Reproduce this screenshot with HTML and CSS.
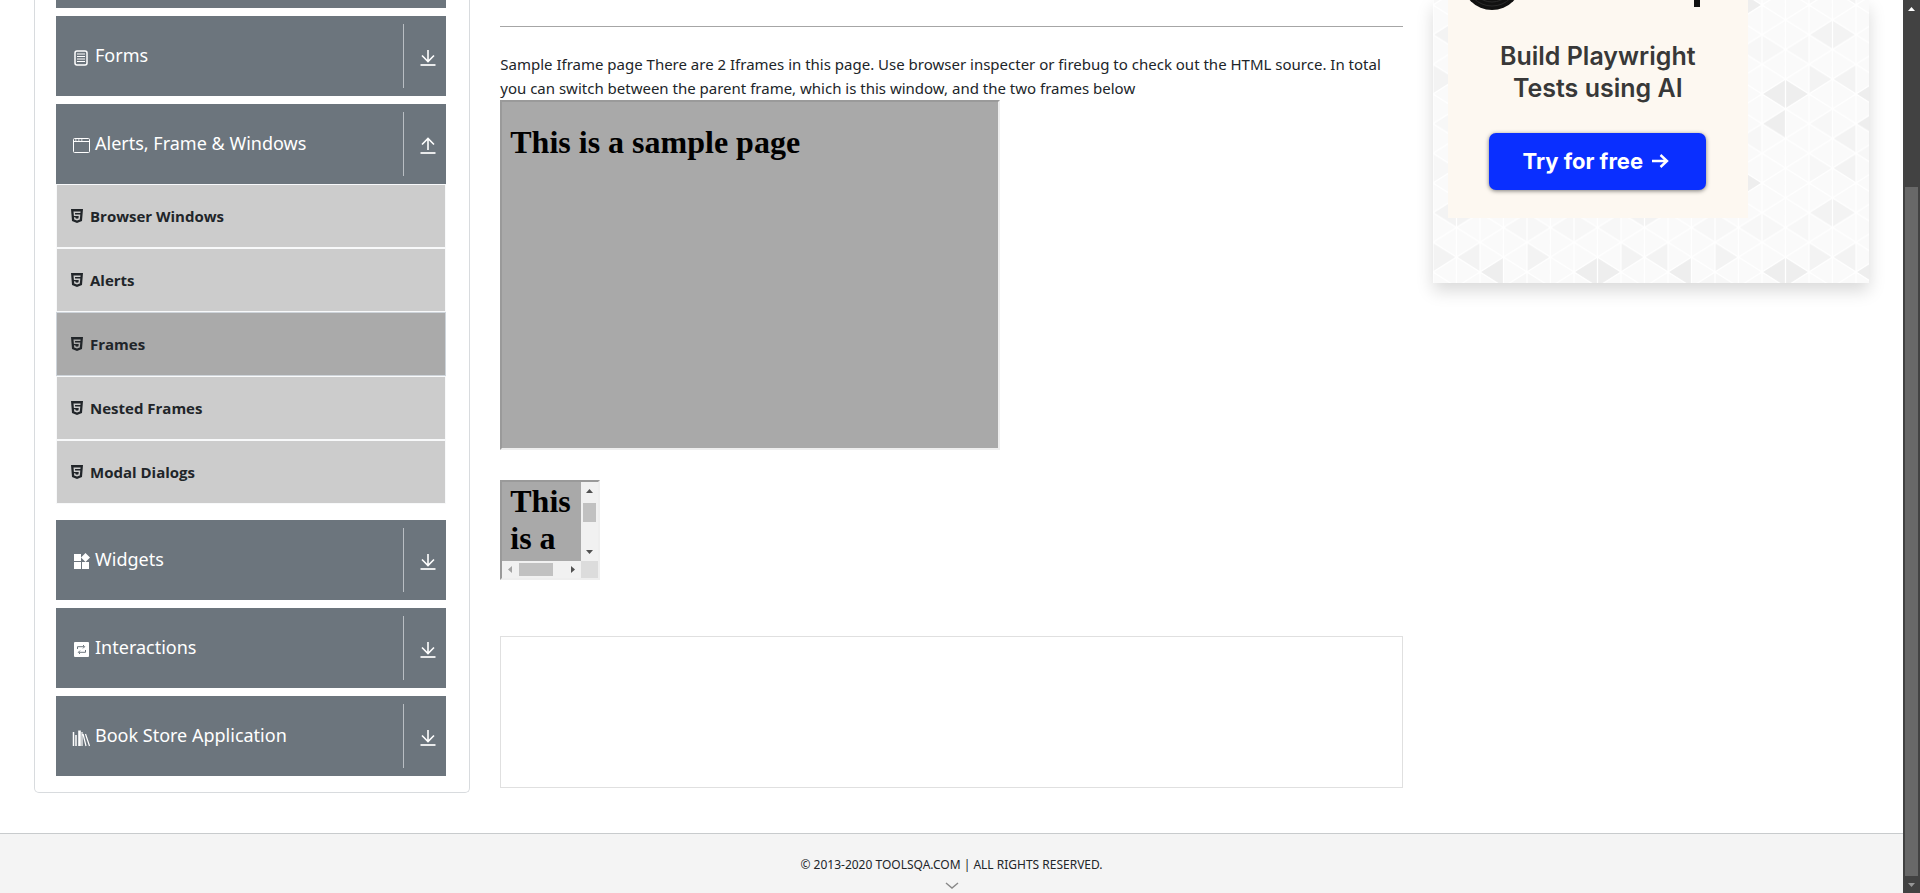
FILE: index.html
```html
<!DOCTYPE html>
<html lang="en">
<head>
<meta charset="utf-8">
<title>Frames</title>
<link rel="stylesheet" href="styles.css">
</head>
<body>
<svg class="defs" aria-hidden="true">
  <symbol id="down" viewBox="0 0 20 20"><path d="M10 2v11M4 7.500l6 6 6-6" fill="none" stroke="currentColor" stroke-width="1.600"/><path d="M2.500 17h15" stroke="currentColor" stroke-width="2" opacity=".85"/></symbol>
  <symbol id="up" viewBox="0 0 20 20"><path d="M10 14V3M4 8.500l6-6 6 6" fill="none" stroke="currentColor" stroke-width="1.600"/><path d="M2.500 17h15" stroke="currentColor" stroke-width="2" opacity=".85"/></symbol>
  <symbol id="html5" viewBox="0 0 12 14"><path fill="currentColor" fill-rule="evenodd" d="M0 0h12l-1 12-5 2-5-2zM2.500 2.500l.4 4.500h4.800l-.2 2.300-1.500.5-1.500-.5-.1-1H3l.2 2.200L6 11.400l2.800-.9.5-5H4.100L4 4h5.400l.2-1.500z"/></symbol>
</svg>
<div class="page">
  <div class="columns">
    <nav class="sidebar">
      <div class="sliver"></div>
      <button class="head" type="button">
        <svg class="icon" viewBox="0 0 18 18" fill="none" stroke="currentColor"><rect x="3" y="2" width="12" height="14" rx="2" stroke-width="1.500"/><path d="M5 5h8M5 7.500h8M5 10h8M5 12.500h8"/></svg>
        <span class="label">Forms</span><span class="toggle"><svg class="arrow"><use href="#down"/></svg></span>
      </button>
      <div class="group">
        <button class="head" type="button">
          <svg class="icon" viewBox="0 0 18 18" fill="none" stroke="currentColor"><rect x="1.500" y="1.500" width="16" height="14" rx="1"/><path d="M1.500 4.500h16M3 3h1.500M6 3h1.500M9 3h1.500"/></svg>
          <span class="label">Alerts, Frame &amp; Windows</span><span class="toggle"><svg class="arrow"><use href="#up"/></svg></span>
        </button>
        <ul class="items">
          <li><a href="#browser-windows"><svg class="shield"><use href="#html5"/></svg>Browser Windows</a></li>
          <li><a href="#alerts"><svg class="shield"><use href="#html5"/></svg>Alerts</a></li>
          <li class="active"><a href="#frames"><svg class="shield"><use href="#html5"/></svg>Frames</a></li>
          <li><a href="#nested"><svg class="shield"><use href="#html5"/></svg>Nested Frames</a></li>
          <li><a href="#modal"><svg class="shield"><use href="#html5"/></svg>Modal Dialogs</a></li>
        </ul>
      </div>
      <button class="head" type="button">
        <svg class="icon" viewBox="0 0 18 18" fill="currentColor"><path d="M2 1h7v7H2zM2 9h7v7H2zM10 9h7v7h-7zM13.500 0L18 4.500 13.500 9 9 4.500z"/></svg>
        <span class="label">Widgets</span><span class="toggle"><svg class="arrow"><use href="#down"/></svg></span>
      </button>
      <button class="head" type="button">
        <svg class="icon" viewBox="0 0 18 18"><rect x="2" y="1" width="15" height="15" rx="1" fill="currentColor"/><path d="M5.500 8V5.700H12M11 4l1.700 1.700L11 7.400M13.500 9v2.300H7M8 9.600l-1.700 1.700L8 13" fill="none" stroke="#6c757d"/></svg>
        <span class="label">Interactions</span><span class="toggle"><svg class="arrow"><use href="#down"/></svg></span>
      </button>
      <button class="head" type="button">
        <svg class="icon" viewBox="0 0 18 18" fill="none" stroke="currentColor"><path d="M1.500 3v14M4 6v11" stroke-width="1.500"/><path d="M7.500 1.500V17" stroke-width="2.600"/><path d="M10 3v14M11 5l3 12M13.500 5l4 12" stroke-width="1.200"/></svg>
        <span class="label">Book Store Application</span><span class="toggle"><svg class="arrow"><use href="#down"/></svg></span>
      </button>
    </nav>

    <main class="content">
      <hr class="rule">
      <p class="intro">Sample Iframe page There are 2 Iframes in this page. Use browser inspecter or firebug to check out the HTML source. In total you can switch between the parent frame, which is this window, and the two frames below</p>
      <section class="frame large"><h1>This is a sample page</h1></section>
      <section class="frame small">
        <h1>This is a</h1>
        <svg class="vbar" viewBox="0 0 17 79"><path fill="#f1f1f1" d="M0 0h17v79H0z"/><path fill="#c1c1c1" d="M2 21h13v19H2z"/><path fill="#505050" d="M5 11h7L8.500 7zM5 68h7l-3.500 4z"/></svg>
        <svg class="hbar" viewBox="0 0 79 17"><path fill="#f1f1f1" d="M0 0h79v17H0z"/><path fill="#c1c1c1" d="M17 2h34v13H17z"/><path fill="#a3a3a3" d="M10 5v7L6 8.500z"/><path fill="#505050" d="M69 5v7l4-3.500z"/></svg>
        <div class="corner"></div>
      </section>
      <div class="slot"></div>
    </main>

    <aside class="side">
      <div class="promo">
        <svg class="pattern" aria-hidden="true">
          <defs>
            <pattern id="shade" width="8" height="12" patternUnits="userSpaceOnUse" patternTransform="translate(0 5) scale(23.500 14.833)">
              <path fill="#f7f7f7" d="M0 10v2l1-1zM3 3l1-1 1 1-1 1zM2 10l1-1 1 1-1 1zM5 3l1-1 1 1-1 1zM0 8l1-1v2zM5 9l1-1v2zM3 7l1-1 1 1-1 1zM7 3l1-1v2zM4 12l1-1v2z"/>
              <path fill="#f3f3f3" d="M0 2l1-1 1 1-1 1zM0 4v2l1-1zM1 5l1-1v2zM1 9l1-1v2zM1 11l1-1v2zM4 4v2l1-1z"/>
              <path fill="#eee" d="M6 6l1-1 1 1-1 1zM6 8l1-1v2zM2 6l1-1v2zM2 8l1-1v2zM5 11v1h1zM5 0v1l1-1z"/>
            </pattern>
            <pattern id="mesh" width="47" height="29.667" patternUnits="userSpaceOnUse" patternTransform="translate(0 5)">
              <path d="M0 0v30M23.500 0v30M47 0v30M0 0l47 29.667M47 0L0 29.667" fill="none" stroke="#fff" stroke-width="1.200"/>
            </pattern>
          </defs>
          <rect width="100%" height="100%" fill="url(#shade)"/><rect width="100%" height="100%" fill="url(#mesh)"/>
        </svg>
        <div class="ad">
          <svg class="brand" viewBox="0 0 300 12" aria-hidden="true"><circle cx="44" cy="-20" r="30" fill="#111"/><g fill="none" stroke="#2a2a2a"><circle cx="44" cy="-20" r="26"/><circle cx="44" cy="-20" r="22"/></g><path fill="#111" d="M246 0h6v7h-6z"/></svg>
          <p class="pitch">Build Playwright<br>Tests using AI</p>
          <a class="cta" href="#try">Try for free <svg class="go" viewBox="0 0 18 16"><path d="M1 8h15M9.500 2L16 8l-6.500 6" fill="none" stroke="currentColor" stroke-width="2.400"/></svg></a>
        </div>
      </div>
    </aside>
  </div>
  <footer class="footer">
    <span>© 2013-2020 TOOLSQA.COM | ALL RIGHTS RESERVED.</span>
    <svg class="chevron" viewBox="0 0 14 8"><path d="M1 1l6 5 6-5" fill="none" stroke="#888" stroke-width="1.400"/></svg>
  </footer>
</div>
<div class="scroll" aria-hidden="true">
  <svg class="tip" viewBox="0 0 17 17"><path fill="#fff" d="M5 11h7L8.500 7z"/></svg>
  <div class="thumb"></div>
  <svg class="tip" viewBox="0 0 17 17"><path fill="#969696" d="M5 7h7l-3.500 4z"/></svg>
</div>
</body>
</html>
```
FILE: styles.css
```css
* { box-sizing: border-box; }
body { margin: 0; display: flex; height: 100vh; overflow: hidden; background: #fff; color: #212529; font: 15px/24px "Noto Sans", "Open Sans", sans-serif; }
.defs { position: absolute; width: 0; height: 0; }
.page { flex: 1; min-width: 0; display: flex; flex-direction: column; }
.columns { display: grid; grid-template-columns: 1fr 2fr 1fr; align-items: start; padding: 0 19px; }

.sidebar { display: flex; flex-direction: column; gap: 8px; margin: 0 15px; padding: 0 23px 16px 21px; border: 1px solid #d8dbde; border-top: 0; border-radius: 0 0 5px 5px; }
.sliver { height: 8px; background: #6c757d; }
.head { display: flex; align-items: center; width: 100%; height: 80px; padding: 8px 0; padding-left: 16px; border: 0; background: #6c757d; color: #fff; font: 18px/24px "Noto Sans", "Open Sans", sans-serif; text-align: left; }
.icon { width: 18px; height: 18px; margin: 3px 5px 0 0; }
.label { flex: 1; padding-bottom: 2px; }
.toggle { display: flex; align-items: center; justify-content: center; align-self: stretch; width: 43px; padding: 4px 0 0 5px; border-left: 1px solid #b9bec3; }
.arrow { width: 20px; height: 20px; }
.items { margin: 0 0 8px; padding: 0; list-style: none; }
.items li { height: 64px; border: 1px solid #f8f9fa; background: #ccc; }
.items .active { background: #aaa; border-color: #ced4da; }
.items a { display: flex; align-items: center; gap: 7px; height: 100%; padding-left: 14px; color: #212529; font-family: "Open Sans", "Noto Sans", sans-serif; font-weight: 700; text-decoration: none; }
.shield { width: 12px; height: 14px; }

.content { margin: 0 15px; }
.rule { margin: 26px 0 25px; border: 0; border-top: 1px solid #a6a6a6; }
.intro { margin: 0; }
.frame { border: 2px inset #eee; background: #a9a9a9; color: #000; }
.frame h1 { margin: 0; font: 700 32px/37px "Liberation Serif", serif; }
.large { width: 500px; max-width: 100%; height: 350px; padding: 22px 8px; }
.small { display: grid; grid-template: 79px 17px / 79px 17px; width: 100px; height: 100px; margin-top: 30px; }
.small h1 { padding: 1px 0 0 8px; overflow: hidden; }
.vbar { width: 17px; height: 79px; }
.hbar { width: 79px; height: 17px; }
.corner { background: #dcdcdc; }
.slot { height: 152px; margin-top: 56px; border: 1px solid #e0e0e0; }

.side { padding: 0 15px; }
.promo { position: relative; height: 283px; padding-left: 15px; background: #fafafa; box-shadow: 0 8px 16px rgba(0, 0, 0, .15); }
.pattern { position: absolute; left: 0; top: 0; width: 100%; height: 100%; }
.ad { position: relative; display: flex; flex-direction: column; align-items: center; width: 300px; height: 218px; background: #fdf8f1; font-family: Inter, sans-serif; }
.brand { flex: none; width: 300px; height: 12px; }
.pitch { margin: 28px 0 29px; color: #383838; font-size: 25px; font-weight: 600; line-height: 32px; text-align: center; }
.cta { display: flex; align-items: center; justify-content: center; gap: 8px; width: 217px; height: 57px; padding: 0 4px 2px 0; border-radius: 7px; background: #0a2fff; color: #fff; font-size: 22px; font-weight: 700; text-decoration: none; box-shadow: 0 1px 4px rgba(0, 0, 0, .5); }
.go { width: 18px; height: 16px; }

.footer { display: flex; flex-direction: column; align-items: center; flex: 1; margin-top: 40px; padding-top: 19px; border-top: 1px solid #c8cbcd; background: #f4f4f4; font-size: 12px; }
.chevron { width: 14px; height: 8px; margin-top: 5px; }

.scroll { display: flex; flex-direction: column; width: 17px; height: 100vh; background: #424242; }
.tip { width: 17px; height: 17px; }
.thumb { flex: 1; margin: 170px 2px 0; background: #686868; }
```
